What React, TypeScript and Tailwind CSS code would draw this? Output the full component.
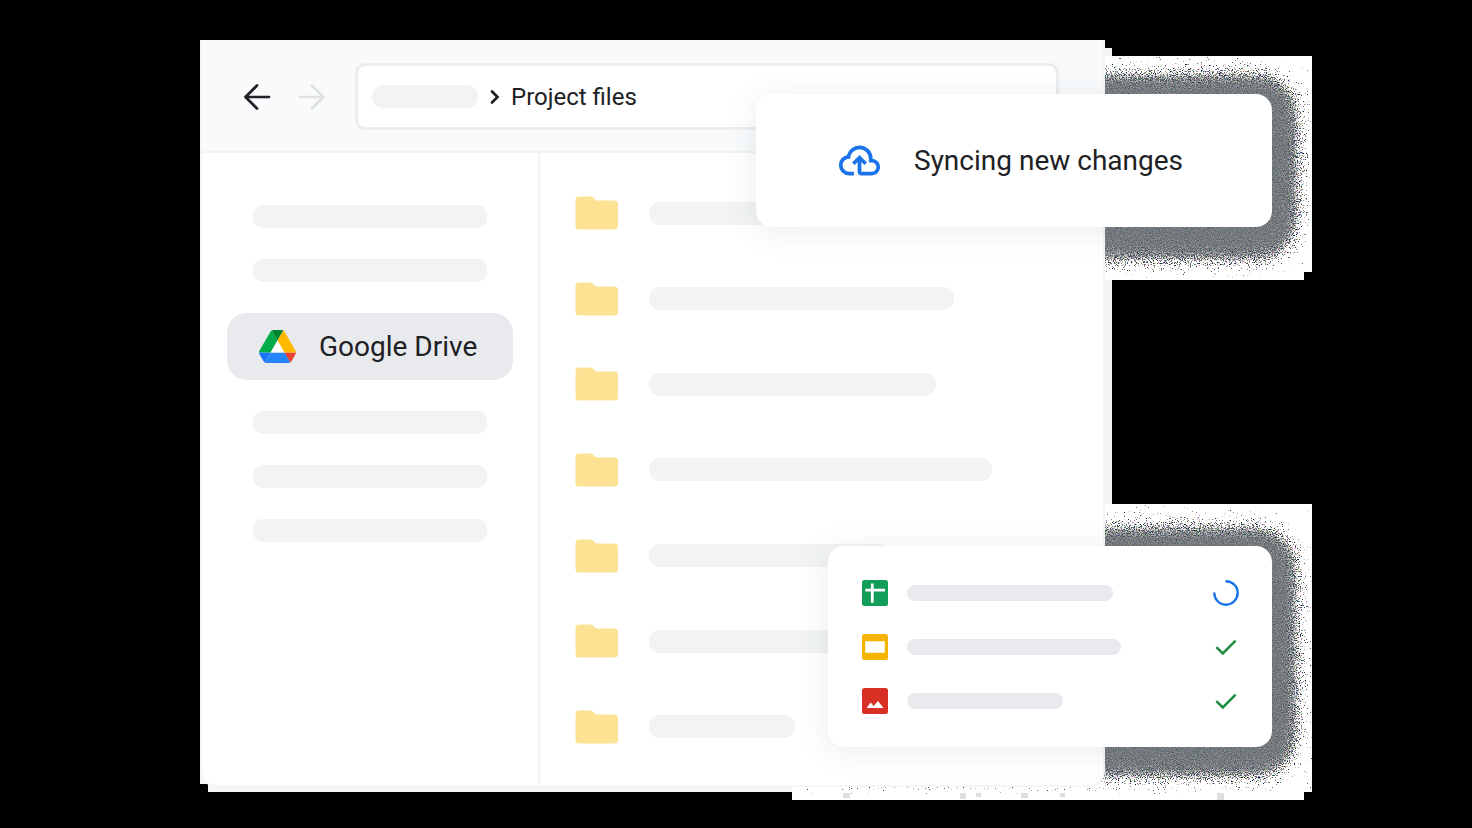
const fileRows = ['w-[195px]', 'w-[305px]', 'w-[287px]', 'w-[343px]', 'w-[240px]', 'w-[240px]', 'w-[146px]'];

function Arrow({ flipped = false }: { flipped?: boolean }) {
  return (
    <svg
      viewBox="0 0 28 28"
      className={flipped ? 'size-7 rotate-180' : 'size-7'}
      fill="none"
      stroke="currentColor"
      strokeWidth="2.7"
      strokeLinecap="round"
      strokeLinejoin="round"
      aria-hidden="true"
    >
      <path d="M26 14H3M14 2.500L2.500 14l11.500 11.500" />
    </svg>
  );
}

function Chevron() {
  return (
    <svg viewBox="0 0 12 16" className="h-4 w-3" fill="none" stroke="#202124" strokeWidth="2.7" strokeLinecap="round" aria-hidden="true">
      <path d="M3 2.5L8.5 8L3 13.5" />
    </svg>
  );
}

function DriveLogo() {
  return (
    <svg viewBox="0 0 87.3 78" className="h-[33px] w-[37px]" aria-hidden="true">
      <path fill="#1a73ff" d="m6.6 66.85 3.85 6.65c.8 1.4 1.95 2.5 3.3 3.3l13.75-23.8h-27.5c0 1.55.4 3.1 1.2 4.5z" />
      <path fill="#00ac47" d="m43.65 25-13.75-23.8c-1.35.8-2.5 1.9-3.3 3.3l-25.4 44a9.06 9.06 0 0 0 -1.2 4.5h27.5z" />
      <path fill="#ea4335" d="m73.55 76.8c1.35-.8 2.5-1.9 3.3-3.3l1.6-2.75 7.65-13.25c.8-1.4 1.2-2.95 1.2-4.5h-27.502l5.852 11.5z" />
      <path fill="#00832d" d="m43.65 25 13.75-23.8c-1.35-.8-2.9-1.2-4.5-1.2h-18.5c-1.6 0-3.15.45-4.5 1.2z" />
      <path fill="#2684fc" d="m59.8 53h-32.3l-13.75 23.8c1.35.8 2.9 1.2 4.5 1.2h50.8c1.6 0 3.15-.45 4.5-1.2z" />
      <path fill="#ffba00" d="m73.4 26.5-12.7-22c-.8-1.4-1.95-2.5-3.3-3.3l-13.75 23.8 16.15 28h27.45c0-1.55-.4-3.1-1.2-4.5z" />
      <path fill="#fff" d="M43.65 25L59.8 53H27.5z" />
    </svg>
  );
}

function Folder() {
  return (
    <svg viewBox="0 0 43 34" className="h-[34px] w-[43px] shrink-0" aria-hidden="true">
      <path fill="#fde293" d="M4 0.5H15.5Q17 0.5 18 1.5L21 4.5H39.5Q43 4.5 43 8V30Q43 33.5 39.5 33.5H4Q0.5 33.5 0.5 30V4Q0.5 0.5 4 0.5Z" />
    </svg>
  );
}

function CloudUpload() {
  return (
    <svg viewBox="0 -960 960 960" className="size-[45px] shrink-0" fill="#1a73e8" aria-hidden="true">
      <path d="M260-160q-91 0-155.500-63T40-377q0-78 47-139t123-78q25-92 100-149t170-57q117 0 198.500 81.500T760-520q69 8 114.500 59.500T920-340q0 75-52.500 127.500T740-160H520q-33 0-56.500-23.500T440-240v-206l-64 62-56-56 160-160 160 160-56 56-64-62v206h220q42 0 71-29t29-71q0-42-29-71t-71-29h-60v-80q0-83-58.500-141.500T480-720q-83 0-141.500 58.500T280-520h-20q-58 0-99 41t-41 99q0 58 41 99t99 41h100v80H260Z" />
    </svg>
  );
}

function SheetIcon() {
  return (
    <svg viewBox="0 0 26 26" className="size-[26px] shrink-0" aria-hidden="true">
      <rect width="26" height="26" rx="2.500" fill="#129d58" />
      <path d="M3.300 10.200H23M10.300 3.500V22.700" stroke="#fff" strokeWidth="2.800" />
    </svg>
  );
}

function SlideIcon() {
  return (
    <svg viewBox="0 0 26 26" className="size-[26px] shrink-0" aria-hidden="true">
      <rect width="26" height="26" rx="2.500" fill="#f4b400" />
      <rect x="3.200" y="7.300" width="19.600" height="11.500" fill="#fff" />
    </svg>
  );
}

function ImageIcon() {
  return (
    <svg viewBox="0 0 26 26" className="size-[26px] shrink-0" aria-hidden="true">
      <rect width="26" height="26" rx="2.500" fill="#d93025" />
      <path d="M4.500 20L8.700 14.500L11.700 18L15.900 13L21.500 20Z" fill="#fff" />
    </svg>
  );
}

function Spinner() {
  return (
    <svg viewBox="0 0 26 26" className="size-[26px] shrink-0" fill="none" stroke="#1a73e8" strokeWidth="2.400" role="img" aria-label="Syncing">
      <path d="M12.500 1.300A11.700 11.700 0 1 1 1.300 12.500" />
    </svg>
  );
}

function Check() {
  return (
    <svg viewBox="0 0 26 26" className="size-[26px] shrink-0" fill="none" stroke="#1e8e3e" strokeWidth="2.500" role="img" aria-label="Synced">
      <path d="M3.300 13.200L9.800 19.500L22.600 6.600" />
    </svg>
  );
}

/* Grainy halo: a blurred slab is dithered by turbulence, once in dark specks and once in softer gray. */
function GrainFilter({ id }: { id: string }) {
  return (
    <filter id={id} x="0" y="0" width="100%" height="100%" filterUnits="userSpaceOnUse" colorInterpolationFilters="sRGB">
      <feGaussianBlur in="SourceAlpha" stdDeviation="11" result="soft" />
      <feTurbulence type="fractalNoise" baseFrequency="0.83" numOctaves="2" seed="7" result="noise" />
      <feColorMatrix in="noise" type="matrix" values="0 0 0 0 0  0 0 0 0 0  0 0 0 0 0  0 0 0 1 0" result="mask" />
      <feComposite in="soft" in2="mask" operator="arithmetic" k2="1" k3="1.900" k4="-1.430" result="sum" />
      <feComponentTransfer in="sum" result="specks">
        <feFuncA type="linear" slope="12" intercept="-1" />
      </feComponentTransfer>
      <feColorMatrix in="noise" type="matrix" values="2 0 0 0 -0.570  1.200 0.800 0 0 -0.550  1.200 0 0.800 0 -0.540  0 0 0 0 1" result="darkGrain" />
      <feComposite in="darkGrain" in2="specks" operator="in" result="outer" />
      <feColorMatrix in="noise" type="matrix" values="0.450 0 0 0 0.240  0.350 0.100 0 0 0.262  0.350 0 0.100 0 0.277  0 0 0 0 1" result="grayGrain" />
      <feComponentTransfer in="soft" result="core">
        <feFuncA type="linear" slope="2" intercept="-1.050" />
      </feComponentTransfer>
      <feComposite in="grayGrain" in2="core" operator="in" result="inner" />
      <feMerge>
        <feMergeNode in="outer" />
        <feMergeNode in="inner" />
      </feMerge>
    </filter>
  );
}

function TopHalo() {
  return (
    <svg viewBox="0 0 207 224" className="absolute top-4 right-0 h-[224px] w-[207px]" aria-hidden="true">
      <defs>
        <GrainFilter id="grain-top" />
      </defs>
      <path d="M0 0H207V216H199V224H0Z" fill="#fff" />
      <g filter="url(#grain-top)">
        <rect x="-120" y="16" width="315" height="190" rx="42" />
      </g>
    </svg>
  );
}

function BottomHalo() {
  return (
    <svg viewBox="0 0 520 296" className="absolute top-[464px] right-0 h-[296px] w-[520px]" aria-hidden="true">
      <defs>
        <GrainFilter id="grain-bottom" />
      </defs>
      <path d="M0 0H520V288H512V296H0Z" fill="#fff" />
      <g filter="url(#grain-bottom)">
        <rect x="20" y="21" width="487" height="254" rx="42" />
      </g>
      <path d="M0 290H520V296H0Z" fill="#fff" />
      <path d="M512 288h8v8h-8z" fill="#000" />
      <path d="M51 289h7v5h-7zM168 289h6v6h-6zM184 289h5v4h-5zM229 289h7v5h-7zM268 289h5v4h-5zM425 289h7v7h-7z" fill="#dedede" />
    </svg>
  );
}

function Placeholder() {
  return <div className="h-[23px] rounded-[10px] bg-[#f1f3f4]" />;
}

export default function App() {
  return (
    <main className="min-h-screen bg-black py-10 pr-40 pl-[200px] font-['Roboto','Liberation_Sans',sans-serif] text-[#202124]">
      <div className="relative pr-[207px]">
        <div className="absolute top-0 right-[208px] bottom-[3px] left-0 bg-[#f5f5f5]" />
        <div className="absolute top-2 right-[200px] -bottom-[5px] left-2 bg-[#f5f5f5]" />
        <TopHalo />
        <BottomHalo />

        <section aria-label="File browser" className="relative overflow-hidden rounded-t-none rounded-b-2xl border-2 border-t-0 border-[#f4f5f5] bg-white">
          <header className="flex h-[113px] items-center border-b-2 border-[#f1f3f4] bg-[#f8fafc] pt-[2px] pr-[44px] pl-[41px]">
            <div className="flex gap-[27px]">
              <button type="button" aria-label="Back">
                <Arrow />
              </button>
              <button type="button" aria-label="Forward" disabled className="text-[#dfe1e3]">
                <Arrow flipped />
              </button>
            </div>
            <nav aria-label="Path" className="ml-[29px] flex h-[67px] flex-1 items-center rounded-[10px] border-[3px] border-[#ebedef] bg-white pl-[14px]">
              <div className="h-[23px] w-[106px] rounded-[11px] bg-[#f1f3f4]" />
              <span className="ml-[11px]">
                <Chevron />
              </span>
              <span className="ml-[10px] text-2xl leading-8">Project files</span>
            </nav>
          </header>

          <div className="flex min-h-[632px]">
            <aside className="w-[338px] shrink-0 border-r-2 border-[#f1f3f4] px-[25px] pt-[52px]">
              <div className="flex flex-col gap-[31px] px-[26px]">
                <Placeholder />
                <Placeholder />
              </div>
              <a href="#drive" className="my-[31px] flex h-[67px] items-center gap-[23px] rounded-[20px] bg-[#e8eaed] pl-8 text-[28px] leading-9">
                <DriveLogo />
                Google Drive
              </a>
              <div className="flex flex-col gap-[31px] px-[26px]">
                <Placeholder />
                <Placeholder />
                <Placeholder />
              </div>
            </aside>
            <ul className="flex flex-1 flex-col justify-between pt-[43px] pr-8 pb-[41px] pl-[35px]">
              {fileRows.map((width, i) => (
                <li key={i} className="flex items-center gap-[31px]">
                  <Folder />
                  <div className={`h-[23px] rounded-[11px] bg-[#f1f3f4] ${width}`} />
                </li>
              ))}
            </ul>
          </div>
        </section>

        <div
          role="status"
          className="absolute top-[54px] right-10 flex h-[133px] w-[516px] items-center gap-8 rounded-2xl bg-white pl-[81px] text-[28px] leading-9 shadow-[0_4px_32px_rgba(60,64,67,0.1)]"
        >
          <CloudUpload />
          Syncing new changes
        </div>

        <ul className="absolute top-[506px] right-10 flex w-[444px] flex-col gap-7 rounded-2xl bg-white pt-[34px] pr-[33px] pb-[33px] pl-[34px] shadow-[0_4px_32px_rgba(60,64,67,0.1)]">
          <li className="flex items-center gap-[19px]">
            <SheetIcon />
            <div className="h-4 w-[206px] rounded-lg bg-[#e8eaed]" />
            <span className="ml-auto">
              <Spinner />
            </span>
          </li>
          <li className="flex items-center gap-[19px]">
            <SlideIcon />
            <div className="h-4 w-[214px] rounded-lg bg-[#e8eaed]" />
            <span className="ml-auto">
              <Check />
            </span>
          </li>
          <li className="flex items-center gap-[19px]">
            <ImageIcon />
            <div className="h-4 w-[156px] rounded-lg bg-[#e8eaed]" />
            <span className="ml-auto">
              <Check />
            </span>
          </li>
        </ul>
      </div>
    </main>
  );
}
